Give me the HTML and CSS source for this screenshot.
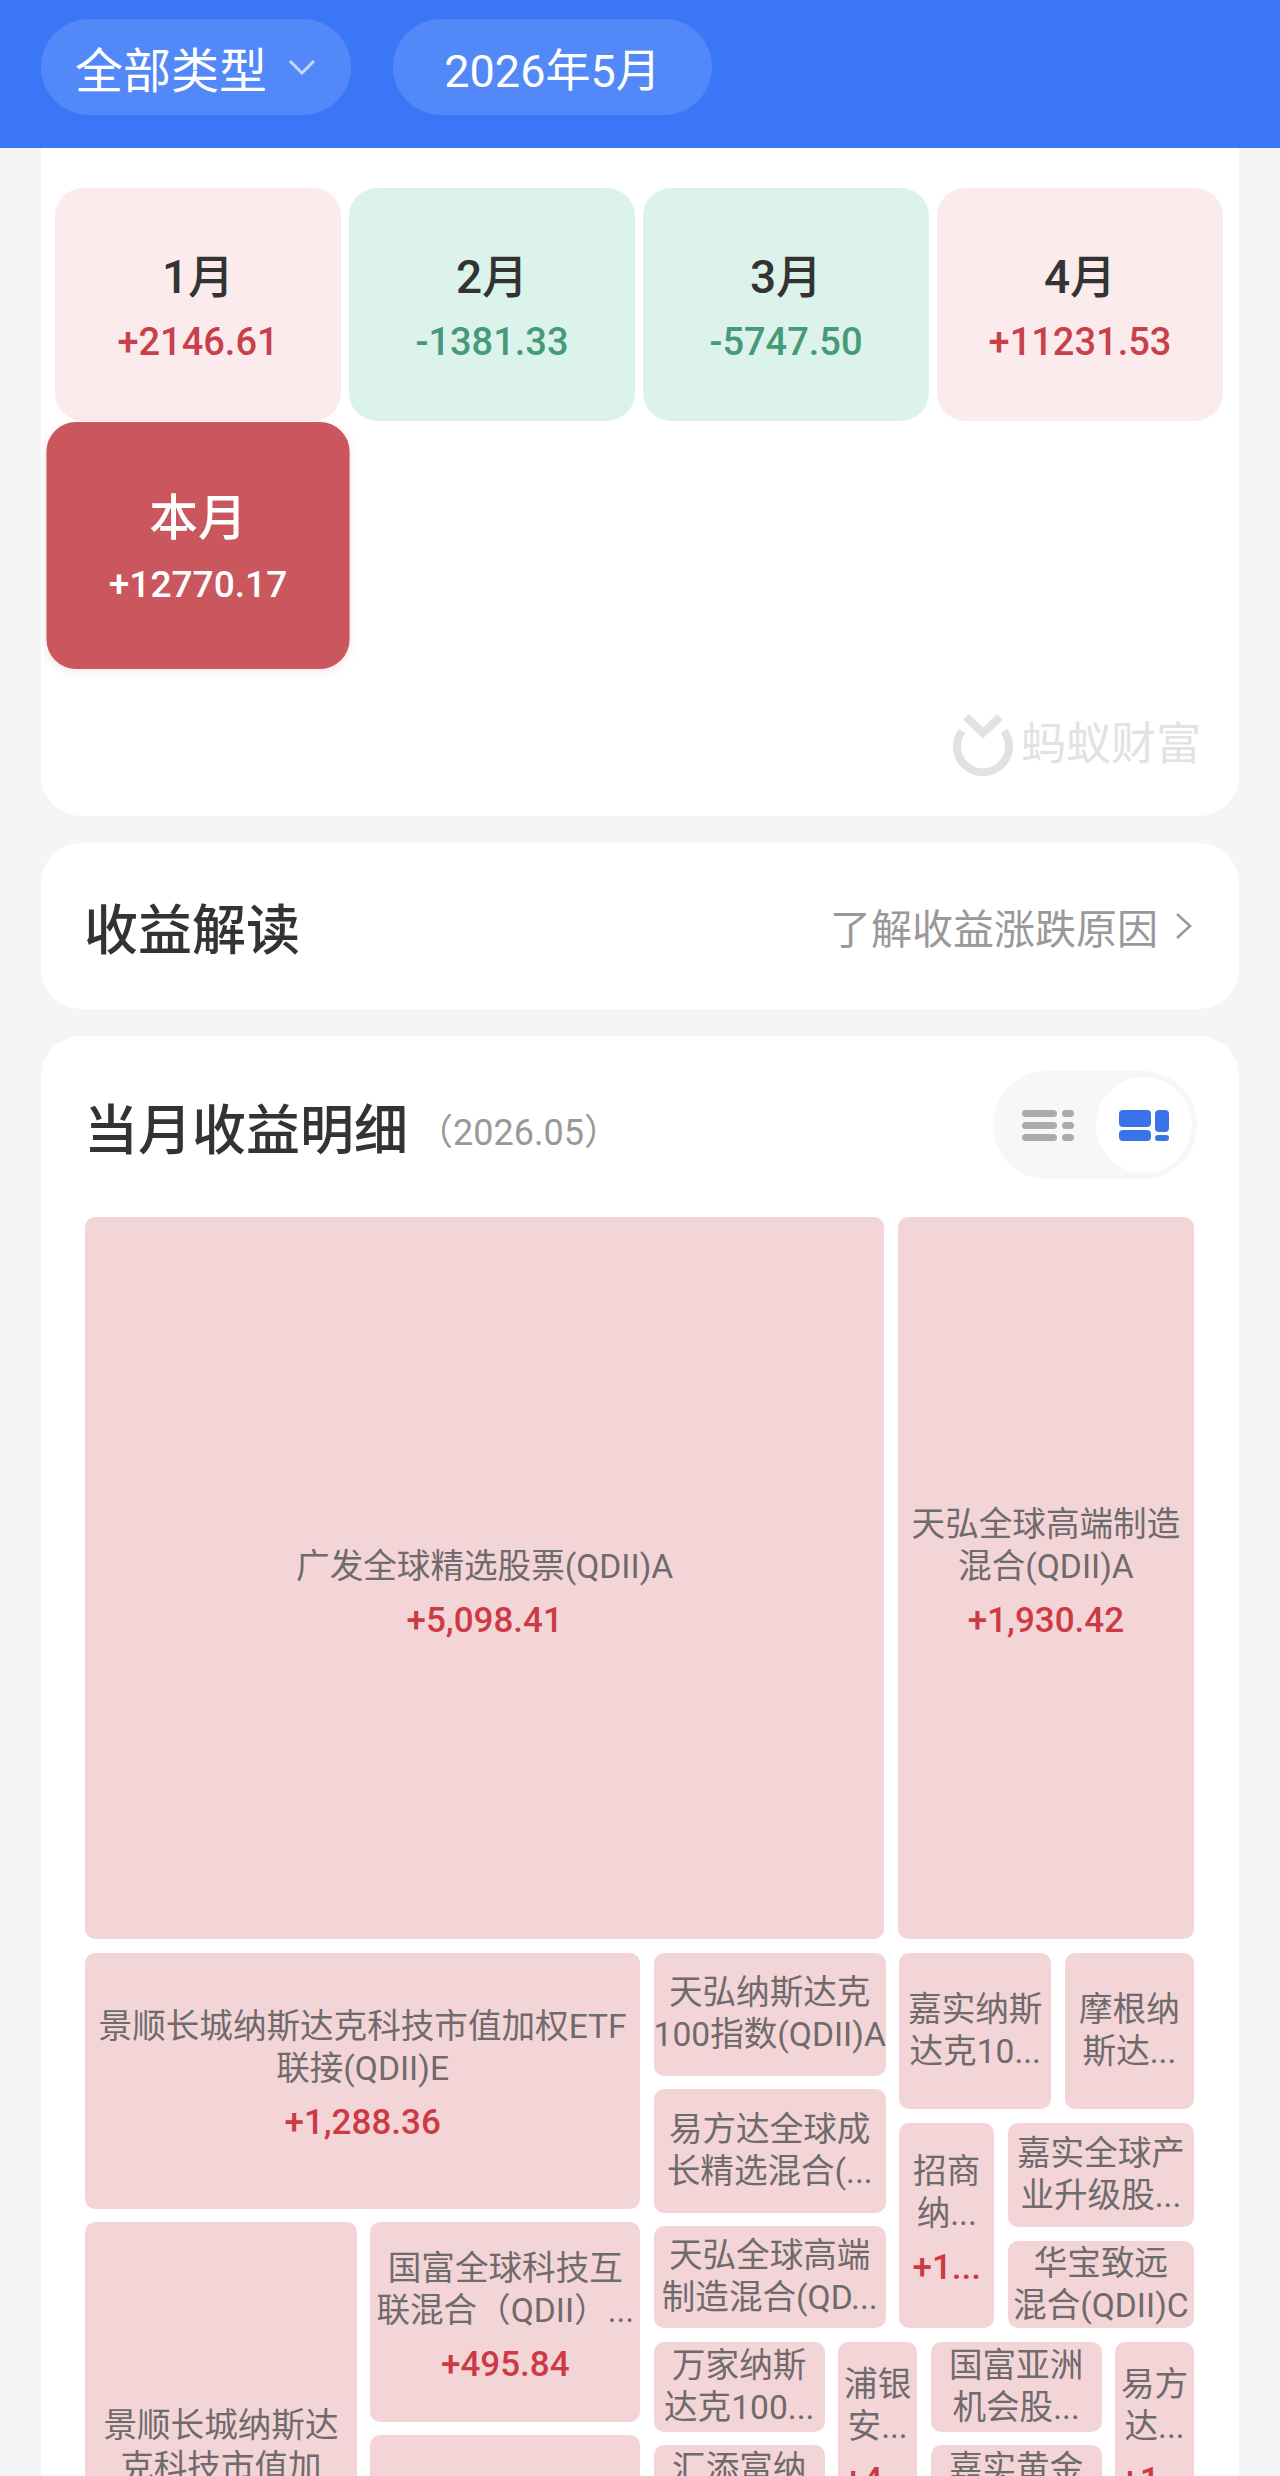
FILE: index.html
```html
<!DOCTYPE html>
<html lang="zh-CN">
<head>
    <meta charset="UTF-8">
    <meta name="viewport" content="width=device-width, initial-scale=1.0">
    <title>月度收益</title>
    <link rel="stylesheet" href="styles.css">
</head>
<body>

    <header class="topbar">
        <div class="chip chip-type">
            <span>全部类型</span>
            <svg class="chip-arrow" width="28" height="16" viewBox="0 0 28 16"><polyline points="2,2 14,14 26,2"/></svg>
        </div>
        <div class="chip chip-date">2026年5月</div>
    </header>

    <section class="card summary">
        <div class="months">
            <div class="month up"><div class="month-name">1月</div><div class="month-val">+2146.61</div></div>
            <div class="month down"><div class="month-name">2月</div><div class="month-val">-1381.33</div></div>
            <div class="month down"><div class="month-name">3月</div><div class="month-val">-5747.50</div></div>
            <div class="month up"><div class="month-name">4月</div><div class="month-val">+11231.53</div></div>
            <div class="month current"><div class="month-name">本月</div><div class="month-val">+12770.17</div></div>
        </div>
        <div class="brand">
            <svg class="brand-mark" width="60" height="62" viewBox="0 0 60 62">
                <path d="M9 17 A26 26 0 1 0 51 17"/>
                <polyline points="13,3 30,19 47,3"/>
            </svg>
            <span class="brand-name">蚂蚁财富</span>
        </div>
    </section>

    <section class="card explain">
        <h2 class="card-title">收益解读</h2>
        <div class="explain-link">
            <span>了解收益涨跌原因</span>
            <svg class="link-arrow" width="17" height="28" viewBox="0 0 17 28"><polyline points="2,2 15,14 2,26"/></svg>
        </div>
    </section>

    <section class="card detail">
        <div class="detail-head">
            <h2 class="card-title">当月收益明细</h2>
            <span class="detail-date">（2026.05）</span>
            <div class="toggle">
                <div class="toggle-btn">
                    <svg width="52" height="31" viewBox="0 0 52 31" fill="#ababab">
                        <rect x="0" y="0" width="35" height="7" rx="3.5"/>
                        <rect x="40" y="0" width="12" height="7" rx="3.5"/>
                        <rect x="0" y="12" width="35" height="7" rx="3.5"/>
                        <rect x="40" y="12" width="12" height="7" rx="3.5"/>
                        <rect x="0" y="24" width="35" height="7" rx="3.5"/>
                        <rect x="40" y="24" width="12" height="7" rx="3.5"/>
                    </svg>
                </div>
                <div class="toggle-btn active">
                    <svg width="50" height="31" viewBox="0 0 50 31" fill="#3a72ea">
                        <rect x="0" y="0" width="32" height="17" rx="4"/>
                        <rect x="0" y="20" width="32" height="11" rx="4"/>
                        <rect x="36" y="0" width="14" height="22" rx="4"/>
                        <rect x="36" y="25" width="14" height="6" rx="3"/>
                    </svg>
                </div>
            </div>
        </div>

        <div class="treemap">
            <div class="tm-row" style="flex:722">
                <div class="tile tile-single" style="flex:799">
                    <div class="tile-name">广发全球精选股票(QDII)A</div>
                    <div class="tile-val">+5,098.41</div>
                </div>
                <div class="tile" style="flex:296">
                    <div class="tile-name">天弘全球高端制造<br>混合(QDII)A</div>
                    <div class="tile-val">+1,930.42</div>
                </div>
            </div>

            <div class="tm-row" style="flex:786">
                <div class="tm-col" style="flex:555">
                    <div class="tile" style="flex:256">
                        <div class="tile-name">景顺长城纳斯达克科技市值加权ETF<br>联接(QDII)E</div>
                        <div class="tile-val">+1,288.36</div>
                    </div>
                    <div class="tm-row" style="flex:517">
                        <div class="tile tile-raised" style="flex:272">
                            <div class="tile-name">景顺长城纳斯达<br>克科技市值加</div>
                        </div>
                        <div class="tm-col" style="flex:270">
                            <div class="tile" style="flex:200">
                                <div class="tile-name">国富全球科技互<br>联混合（QDII）...</div>
                                <div class="tile-val">+495.84</div>
                            </div>
                            <div class="tile" style="flex:304"></div>
                        </div>
                    </div>
                </div>

                <div class="tm-col" style="flex:540">
                    <div class="tm-row" style="flex:375">
                        <div class="tm-col" style="flex:232">
                            <div class="tile" style="flex:123"><div class="tile-name">天弘纳斯达克<br>100指数(QDII)A</div></div>
                            <div class="tile" style="flex:123"><div class="tile-name">易方达全球成<br>长精选混合(...</div></div>
                            <div class="tile" style="flex:102"><div class="tile-name">天弘全球高端<br>制造混合(QD...</div></div>
                        </div>
                        <div class="tm-col" style="flex:295">
                            <div class="tm-row" style="flex:156">
                                <div class="tile" style="flex:152"><div class="tile-name">嘉实纳斯<br>达克10...</div></div>
                                <div class="tile" style="flex:129"><div class="tile-name">摩根纳<br>斯达...</div></div>
                            </div>
                            <div class="tm-row" style="flex:205">
                                <div class="tile" style="flex:95">
                                    <div class="tile-name">招商<br>纳...</div>
                                    <div class="tile-val">+1...</div>
                                </div>
                                <div class="tm-col" style="flex:186">
                                    <div class="tile" style="flex:105"><div class="tile-name">嘉实全球产<br>业升级股...</div></div>
                                    <div class="tile" style="flex:88"><div class="tile-name">华宝致远<br>混合(QDII)C</div></div>
                                </div>
                            </div>
                        </div>
                    </div>
                    <div class="tm-row" style="flex:193">
                        <div class="tm-col" style="flex:171">
                            <div class="tile" style="flex:90"><div class="tile-name">万家纳斯<br>达克100...</div></div>
                            <div class="tile" style="flex:90"><div class="tile-name">汇添富纳<br>斯达...</div></div>
                        </div>
                        <div class="tile" style="flex:79">
                            <div class="tile-name">浦银<br>安...</div>
                            <div class="tile-val">+4...</div>
                        </div>
                        <div class="tm-col" style="flex:171">
                            <div class="tile" style="flex:90"><div class="tile-name">国富亚洲<br>机会股...</div></div>
                            <div class="tile" style="flex:90"><div class="tile-name">嘉实黄金<br>(QDII)...</div></div>
                        </div>
                        <div class="tile" style="flex:79">
                            <div class="tile-name">易方<br>达...</div>
                            <div class="tile-val">+1...</div>
                        </div>
                    </div>
                    <div class="tile" style="flex:190"></div>
                </div>
            </div>
        </div>
    </section>

</body>
</html>
```

FILE: styles.css
```css
html, body { margin: 0; height: 2476px; overflow: hidden; }
body { background: #f5f5f5; font-family: Roboto, "Noto Sans CJK SC", sans-serif; color: #333; }

/* top bar */
.topbar { height: 148px; box-sizing: border-box; padding: 19px 41px 33px; display: flex; gap: 42px; background: #3b76f6; }
.chip { height: 96px; border-radius: 48px; background: #5388f8; color: #fff; font-size: 45px; display: flex; align-items: center; box-sizing: border-box; }
.chip-type { width: 310px; padding-left: 34px; gap: 21px; font-size: 48px; }
.chip-date { width: 319px; justify-content: center; }
.chip-arrow polyline { fill: none; stroke: #c5d8fd; stroke-width: 3; }

/* cards */
.card { margin: 0 41px 27px; background: #fff; border-radius: 40px; }
.card-title { margin: 0; font-size: 54px; font-weight: 500; color: #333; }

.summary { border-radius: 0 0 40px 40px; padding: 40px 14px 41px; height: 668px; box-sizing: border-box; }
.months { display: grid; grid-template-columns: repeat(4, 286px); gap: 8px; }
.month { height: 233px; border-radius: 28px; box-sizing: border-box; padding-top: 62px; text-align: center; }
.month-name { font-size: 46px; line-height: 54px; font-weight: 500; color: #333; }
.month-val { margin-top: 11px; font-size: 38px; line-height: 54px; font-weight: 500; }
.up { background: #fbebec; }
.up .month-val { color: #c8404a; }
.down { background: #dcf3eb; }
.down .month-val { color: #459a78; }
.current { background: #c9575d; transform: scale(1.06); box-shadow: 0 2px 8px rgba(201, 87, 93, .15); padding-top: 64px; }
.current .month-name, .current .month-val { color: #fff; }
.current .month-val { margin-top: 9px; font-size: 35px; }

.brand { margin-top: 51px; padding-right: 24px; display: flex; justify-content: flex-end; align-items: center; gap: 8px; }
.brand-mark path, .brand-mark polyline { fill: none; stroke: #e2e2e2; stroke-width: 8; }
.brand-name { font-size: 45px; line-height: 64px; font-weight: 400; color: #e2e2e2; }

.explain { height: 166px; padding: 0 47px 0 43px; display: flex; align-items: center; justify-content: space-between; }
.explain-link { display: flex; align-items: center; gap: 17px; font-size: 41px; color: #999; }
.link-arrow polyline { fill: none; stroke: #999; stroke-width: 2.5; }

/* month detail */
.detail { padding: 35px 45px 0 44px; margin-bottom: 0; }
.detail-head { display: flex; align-items: center; height: 108px; margin-bottom: 38px; }
.detail-head .card-title { padding-top: 3px; margin-left: -1px; }
.detail-date { margin: 8px 0 0 9px; font-size: 36px; color: #999; }
.toggle { margin-left: auto; margin-right: -3px; width: 204px; height: 108px; box-sizing: border-box; padding: 7px 5px 7px 7px; border-radius: 54px; background: #f7f7f7; display: flex; justify-content: space-between; align-items: center; }
.toggle-btn { width: 96px; height: 96px; border-radius: 50%; display: flex; align-items: center; justify-content: center; }
.toggle-btn.active { background: #fff; }

/* treemap */
.treemap { height: 1522px; display: flex; flex-direction: column; gap: 13.5px; }
.tm-row, .tm-col { display: flex; gap: 13.5px; min-width: 0; min-height: 0; }
.tm-col { flex-direction: column; }
.tile { min-width: 0; min-height: 0; overflow: hidden; border-radius: 10px; background: #f3d5d8; display: flex; flex-direction: column; align-items: center; justify-content: center; text-align: center; }
.tile-single { padding-top: 42px; }
.tile-raised { padding-bottom: 68px; }
.tile-name { font-size: 33.6px; line-height: 42px; color: #6f6a6b; white-space: nowrap; }
.tile-val { margin: 10px 0 9px; font-size: 35px; line-height: 46px; font-weight: 500; color: #cc3a44; white-space: nowrap; }
```
